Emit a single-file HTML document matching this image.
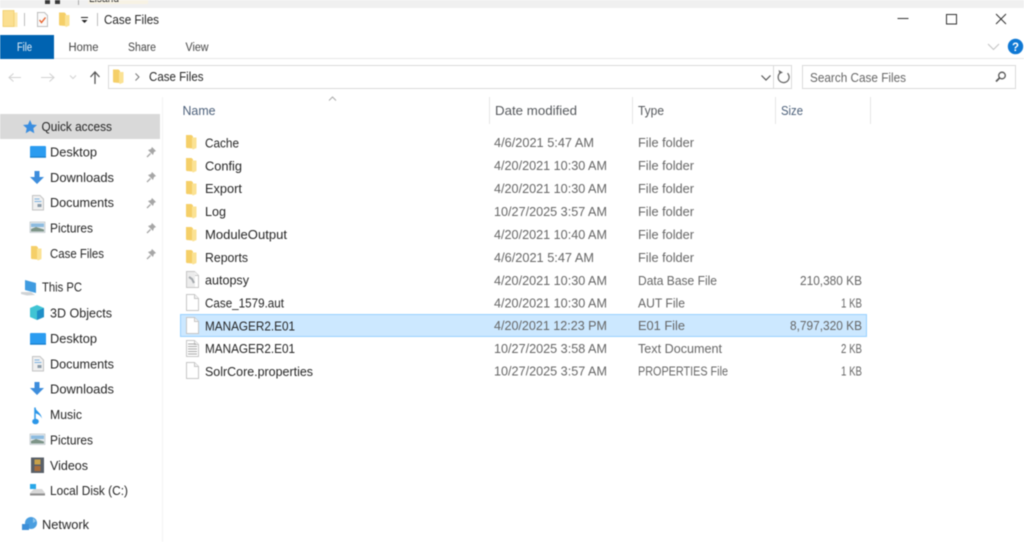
<!DOCTYPE html>
<html><head><meta charset="utf-8"><title>Case Files</title>
<style>
html,body{margin:0;padding:0;background:#fff;width:1024px;height:542px;overflow:hidden}
svg{display:block;filter:blur(.45px)}
text{font-family:"Liberation Sans",sans-serif;font-size:12.5px;fill:#262626}
.g{fill:#666}
.h{fill:#4c607a}
</style></head><body>
<svg width="1024" height="542" viewBox="0 0 1024 542" xmlns="http://www.w3.org/2000/svg">
<defs>
<g id="fold"><path d="M0 0h5.500l1.500 1.500v12l-6.500-.5-.5-1z" fill="#f5cf68"/><path d="M6 2.500h4.500v10.500l-3.500 1.500-1-1z" fill="#fbe293"/></g>
<g id="doc"><path d="M.5 .5h8l4 4v12h-12z" fill="#fff" stroke="#c6c6c6"/><path d="M8.500 .5v4h4" fill="#f4f4f4" stroke="#c6c6c6"/></g>
<g id="pin"><path d="M2 11l3.500-3.500" stroke="#a6a6a6" stroke-width="1.300"/><path d="M7 1l4 4-2 1-1 3-5-5 3-1z" fill="#a6a6a6"/></g>
<g id="desk"><rect width="16" height="11.500" rx="1" fill="#2b9cf0"/><rect y="10.500" width="16" height="1.200" fill="#1078c8"/></g>
<g id="dl"><path d="M4.500 0h5v6h4.500l-7 7-7-7h4.500z" fill="#3d8ddc"/></g>
<g id="docs"><path d="M.5 .5h7.500l3.500 3.500v11h-11z" fill="#f0f0f0" stroke="#c4c4c4"/><path d="M2.500 4h5M2.500 6.500h7" stroke="#7fb2e0"/><path d="M5.500 9h4v3h-4z" fill="#8a9aa8"/></g>
<g id="pic"><rect width="15" height="10.500" fill="#e4e9ec" stroke="#a8b0b5" stroke-width=".5"/><path d="M1 1.500h13v3.500H1z" fill="#8cbbe0"/><path d="M1 7l5-2 8 2.500v2H1z" fill="#7d9488"/></g>
</defs>

<rect width="1024" height="8" fill="#f0f0f0"/>
<rect x="45" y="0" width="5" height="4" fill="#3a3a3a"/><rect x="55" y="0" width="5" height="4" fill="#3a3a3a"/>
<rect x="78" width="1" height="5" fill="#aaa"/><rect x="88" width="60" height="4" fill="#f7f2e4"/>
<text x="89" y="2" textLength="30" lengthAdjust="spacingAndGlyphs" style="font-size:11px">Lisand</text>

<path d="M3 10.500h11v2h3.500v14.500H3z" fill="#fbdf90"/><path d="M14 12.500v14.500h3.500V12.500z" fill="#fde9ad"/><path d="M3 10.500h11v16H3z" fill="none" stroke="#f0cc6a" stroke-width=".8"/>
<rect x="24" y="13" width="1" height="13" fill="#bcbcbc"/>
<path d="M37.500 12.500h7l3 3v11h-10z" fill="#fafafa" stroke="#bdbdbd"/>
<path d="M39.500 20l2 2.500 4-5" fill="none" stroke="#e8622c" stroke-width="1.400"/>
<use href="#fold" x="59" y="12.500"/>
<rect x="81" y="17" width="7" height="1" fill="#222"/><path d="M81.500 20h6l-3 3z" fill="#222"/>
<rect x="97" y="13" width="1" height="13" fill="#bcbcbc"/>
<text x="104" y="24" textLength="55" lengthAdjust="spacingAndGlyphs" style="font-size:13px">Case Files</text>

<path d="M897.500 18.500h11" stroke="#333" stroke-width="1" fill="none"/>
<rect x="946.500" y="14.500" width="10" height="9.500" fill="none" stroke="#333"/>
<path d="M996 14l10 10M1006 14l-10 10" stroke="#333" stroke-width="1" fill="none"/>

<rect x="0" y="35" width="54" height="24" fill="#0063b1"/>
<text x="17" y="51" textLength="15" lengthAdjust="spacingAndGlyphs" style="font-size:11.500px;fill:#e8f1f8">File</text>
<text x="68.500" y="51" textLength="30" lengthAdjust="spacingAndGlyphs" style="font-size:11.500px;fill:#444">Home</text>
<text x="128" y="51" textLength="28" lengthAdjust="spacingAndGlyphs" style="font-size:11.500px;fill:#444">Share</text>
<text x="185.500" y="51" textLength="23" lengthAdjust="spacingAndGlyphs" style="font-size:11.500px;fill:#444">View</text>
<rect y="58" x="54" width="970" height="1" fill="#e8e8e8"/>
<path d="M988 44l5.500 5.500 5.500-5.500" fill="none" stroke="#c4c4c4" stroke-width="1.100"/>
<circle cx="1015.500" cy="46.500" r="7.700" fill="#0f78d4"/>
<text x="1012" y="51" style="font-size:11.500px;font-weight:bold;fill:#fff">?</text>

<path d="M21 77.500h-12m4.500-4l-4.500 4 4.500 4" fill="none" stroke="#d2d2d2" stroke-width="1.100"/>
<path d="M41 77.500h13m-4.500-4l4.500 4-4.500 4" fill="none" stroke="#d2d2d2" stroke-width="1.100"/>
<path d="M70 75.500l3 3 3-3" fill="none" stroke="#d2d2d2"/>
<path d="M95 84V72.500m-4.500 4.500l4.500-5 4.500 5" fill="none" stroke="#555" stroke-width="1.300"/>

<rect x="108.500" y="65.500" width="683" height="23" fill="#fff" stroke="#dadada"/>
<use href="#fold" x="113" y="69.500"/>
<path d="M135.500 73.500l3.500 3.500-3.500 3.500" fill="none" stroke="#777"/>
<text x="149" y="81" textLength="54.500" lengthAdjust="spacingAndGlyphs" style="font-size:12.500px">Case Files</text>
<path d="M761.500 75.500l4.500 4.500 4.500-4.500" fill="none" stroke="#555" stroke-width="1.200"/>
<rect x="773" y="65" width="1" height="23" fill="#dadada"/>
<path d="M780 73a5.500 5.500 0 1 0 7.500 .2" fill="none" stroke="#666" stroke-width="1.200"/><path d="M778.500 70l1 4 3.500-1.500z" fill="#666"/>
<rect x="802.500" y="65.500" width="213" height="23" fill="#fff" stroke="#dadada"/>
<text x="810" y="82" textLength="96" lengthAdjust="spacingAndGlyphs" class="g" style="font-size:12.500px">Search Case Files</text>
<circle cx="1002" cy="75.500" r="3.300" fill="none" stroke="#555" stroke-width="1.300"/>
<path d="M999.500 78l-3.500 3.500" stroke="#555" stroke-width="1.700"/>

<rect x="162" y="97" width="1" height="445" fill="#f3f3f3"/>
<rect x="0" y="114" width="160" height="25" fill="#d9d9d9"/>
<path d="M329 100.500l3.500-3.500 3.500 3.500" fill="none" stroke="#aaa"/>
<text x="182.500" y="115" textLength="33" lengthAdjust="spacingAndGlyphs" class="h">Name</text>
<text x="495" y="115" textLength="82" lengthAdjust="spacingAndGlyphs" style="fill:#55585c">Date modified</text>
<text x="638" y="115" textLength="26" lengthAdjust="spacingAndGlyphs" style="fill:#55585c">Type</text>
<text x="781" y="115" textLength="22" lengthAdjust="spacingAndGlyphs" class="h">Size</text>
<g fill="#e5e5e5"><rect x="489" y="97" width="1" height="27"/><rect x="632" y="97" width="1" height="27"/><rect x="775" y="97" width="1" height="27"/><rect x="870" y="97" width="1" height="27"/></g>

<!-- nav -->
<path d="M30 121l2 4.500 5 .5-3.700 3.300 1 5-4.300-2.600-4.300 2.600 1-5-3.700-3.300 5-.5z" fill="#3a8ee0" transform="translate(0 -1)"/>
<text x="41.500" y="131" textLength="70.500" lengthAdjust="spacingAndGlyphs">Quick access</text>
<use href="#desk" x="30" y="146"/><text x="50" y="156.500" textLength="47" lengthAdjust="spacingAndGlyphs">Desktop</text><use href="#pin" x="145" y="146"/>
<use href="#dl" x="30" y="171"/><text x="50" y="182" textLength="64" lengthAdjust="spacingAndGlyphs">Downloads</text><use href="#pin" x="145" y="171"/>
<use href="#docs" x="32" y="195"/><text x="50" y="207" textLength="64" lengthAdjust="spacingAndGlyphs">Documents</text><use href="#pin" x="145" y="197"/>
<use href="#pic" x="30" y="222"/><text x="50" y="232.500" textLength="43" lengthAdjust="spacingAndGlyphs">Pictures</text><use href="#pin" x="145" y="222"/>
<use href="#fold" x="31" y="246"/><text x="50" y="258" textLength="54" lengthAdjust="spacingAndGlyphs">Case Files</text><use href="#pin" x="145" y="248"/>

<path d="M25 280l11 3v10l-11-3z" fill="#3f9be0"/><path d="M21 292h10l4 3-8 .5-6-1.500z" fill="#cfd3d6"/>
<text x="42" y="291.500" textLength="40" lengthAdjust="spacingAndGlyphs">This PC</text>
<path d="M37 305l7 3v9l-7 3-7-3v-9z" fill="#40c4d4"/><path d="M37 311l7-3v9l-7 3z" fill="#1f8fc8"/>
<text x="50" y="317.500" textLength="62" lengthAdjust="spacingAndGlyphs">3D Objects</text>
<use href="#desk" x="30" y="333"/><text x="50" y="343" textLength="47" lengthAdjust="spacingAndGlyphs">Desktop</text>
<use href="#docs" x="32" y="356"/><text x="50" y="368.500" textLength="64" lengthAdjust="spacingAndGlyphs">Documents</text>
<use href="#dl" x="30" y="382"/><text x="50" y="393.500" textLength="64" lengthAdjust="spacingAndGlyphs">Downloads</text>
<path d="M35 407.500v14" stroke="#2b96e8" stroke-width="1.500"/><ellipse cx="35.500" cy="421.500" rx="3.300" ry="2.800" fill="#2b96e8"/><path d="M35 407.500c1.500 4 6 5 7 11-2-4-5-4.500-7-5.500z" fill="#2b96e8"/>
<text x="50" y="419" textLength="32" lengthAdjust="spacingAndGlyphs">Music</text>
<use href="#pic" x="30" y="434"/><text x="50" y="444.500" textLength="43" lengthAdjust="spacingAndGlyphs">Pictures</text>
<rect x="31" y="457.500" width="13" height="15.500" fill="#5a6068"/><rect x="34.500" y="459.500" width="6" height="5" fill="#c9a24a"/><rect x="34.500" y="466" width="6" height="5" fill="#a86c3a"/>
<text x="50" y="470" textLength="38" lengthAdjust="spacingAndGlyphs">Videos</text>
<path d="M30 484h6v5h-6z" fill="#29a7e8"/><path d="M30 493l4-4h8l3 4v2H30z" fill="#d8d8d8"/><path d="M30 493.500h15v2H30z" fill="#8e8e8e"/>
<text x="50" y="495" textLength="78" lengthAdjust="spacingAndGlyphs">Local Disk (C:)</text>
<circle cx="31" cy="523" r="6" fill="#4a9ee0"/><path d="M22 524h7v6h-7z" fill="#3d8fd8"/><path d="M33 518l3 3-3 2z" fill="#8fc7ee"/>
<text x="42" y="529" textLength="47" lengthAdjust="spacingAndGlyphs">Network</text>

<!-- selected row -->
<rect x="180.500" y="314.500" width="686" height="22" fill="#cce8ff" stroke="#99d1ff"/>

<!-- files -->
<use href="#fold" x="186" y="135"/><text x="205" y="147.500" textLength="34" lengthAdjust="spacingAndGlyphs">Cache</text><text class="g" x="494" y="147" textLength="100" lengthAdjust="spacingAndGlyphs">4/6/2021 5:47 AM</text><text class="g" x="638" y="147" textLength="56" lengthAdjust="spacingAndGlyphs">File folder</text>
<use href="#fold" x="186" y="158"/><text x="205" y="170.500" textLength="37" lengthAdjust="spacingAndGlyphs">Config</text><text class="g" x="494" y="170" textLength="113" lengthAdjust="spacingAndGlyphs">4/20/2021 10:30 AM</text><text class="g" x="638" y="170" textLength="56" lengthAdjust="spacingAndGlyphs">File folder</text>
<use href="#fold" x="186" y="181"/><text x="205" y="193" textLength="37" lengthAdjust="spacingAndGlyphs">Export</text><text class="g" x="494" y="193" textLength="113" lengthAdjust="spacingAndGlyphs">4/20/2021 10:30 AM</text><text class="g" x="638" y="193" textLength="56" lengthAdjust="spacingAndGlyphs">File folder</text>
<use href="#fold" x="186" y="204"/><text x="205" y="216" textLength="21" lengthAdjust="spacingAndGlyphs">Log</text><text class="g" x="494" y="216" textLength="113" lengthAdjust="spacingAndGlyphs">10/27/2025 3:57 AM</text><text class="g" x="638" y="216" textLength="56" lengthAdjust="spacingAndGlyphs">File folder</text>
<use href="#fold" x="186" y="227"/><text x="205" y="239" textLength="82" lengthAdjust="spacingAndGlyphs">ModuleOutput</text><text class="g" x="494" y="239" textLength="113" lengthAdjust="spacingAndGlyphs">4/20/2021 10:40 AM</text><text class="g" x="638" y="239" textLength="56" lengthAdjust="spacingAndGlyphs">File folder</text>
<use href="#fold" x="186" y="250"/><text x="205" y="262" textLength="43" lengthAdjust="spacingAndGlyphs">Reports</text><text class="g" x="494" y="262" textLength="100" lengthAdjust="spacingAndGlyphs">4/6/2021 5:47 AM</text><text class="g" x="638" y="262" textLength="56" lengthAdjust="spacingAndGlyphs">File folder</text>
<use href="#doc" x="186" y="271"/><rect x="187" y="272" width="8" height="15" fill="#ececec"/><path d="M189 277l3 2 2 4" stroke="#a4a8ac" stroke-width="2" fill="none"/><text x="205" y="284.500" textLength="44" lengthAdjust="spacingAndGlyphs">autopsy</text><text class="g" x="494" y="285" textLength="113" lengthAdjust="spacingAndGlyphs">4/20/2021 10:30 AM</text><text class="g" x="638" y="285" textLength="79" lengthAdjust="spacingAndGlyphs">Data Base File</text><text class="g" x="800" y="285" textLength="62" lengthAdjust="spacingAndGlyphs">210,380 KB</text>
<use href="#doc" x="186" y="294"/><text x="205" y="307.500" textLength="79" lengthAdjust="spacingAndGlyphs">Case_1579.aut</text><text class="g" x="494" y="307.500" textLength="113" lengthAdjust="spacingAndGlyphs">4/20/2021 10:30 AM</text><text class="g" x="638" y="307.500" textLength="47" lengthAdjust="spacingAndGlyphs">AUT File</text><text class="g" x="841" y="307.500" textLength="21" lengthAdjust="spacingAndGlyphs">1 KB</text>
<use href="#doc" x="186" y="317"/><text x="205" y="330.500" textLength="90" lengthAdjust="spacingAndGlyphs">MANAGER2.E01</text><text class="g" x="494" y="330" textLength="113" lengthAdjust="spacingAndGlyphs">4/20/2021 12:23 PM</text><text class="g" x="638" y="330" textLength="47" lengthAdjust="spacingAndGlyphs">E01 File</text><text class="g" x="790" y="330" textLength="72" lengthAdjust="spacingAndGlyphs">8,797,320 KB</text>
<use href="#doc" x="186" y="340"/><path d="M188 344h8M188 346.500h9M188 349h9M188 351.500h9M188 354h9" stroke="#a8a8a8"/><text x="205" y="353" textLength="90" lengthAdjust="spacingAndGlyphs">MANAGER2.E01</text><text class="g" x="494" y="353" textLength="113" lengthAdjust="spacingAndGlyphs">10/27/2025 3:58 AM</text><text class="g" x="638" y="353" textLength="84" lengthAdjust="spacingAndGlyphs">Text Document</text><text class="g" x="841" y="353" textLength="21" lengthAdjust="spacingAndGlyphs">2 KB</text>
<use href="#doc" x="186" y="362"/><text x="205" y="376" textLength="108" lengthAdjust="spacingAndGlyphs">SolrCore.properties</text><text class="g" x="494" y="375.500" textLength="113" lengthAdjust="spacingAndGlyphs">10/27/2025 3:57 AM</text><text class="g" x="638" y="375.500" textLength="90" lengthAdjust="spacingAndGlyphs">PROPERTIES File</text><text class="g" x="841" y="375.500" textLength="21" lengthAdjust="spacingAndGlyphs">1 KB</text>
</svg>
</body></html>
